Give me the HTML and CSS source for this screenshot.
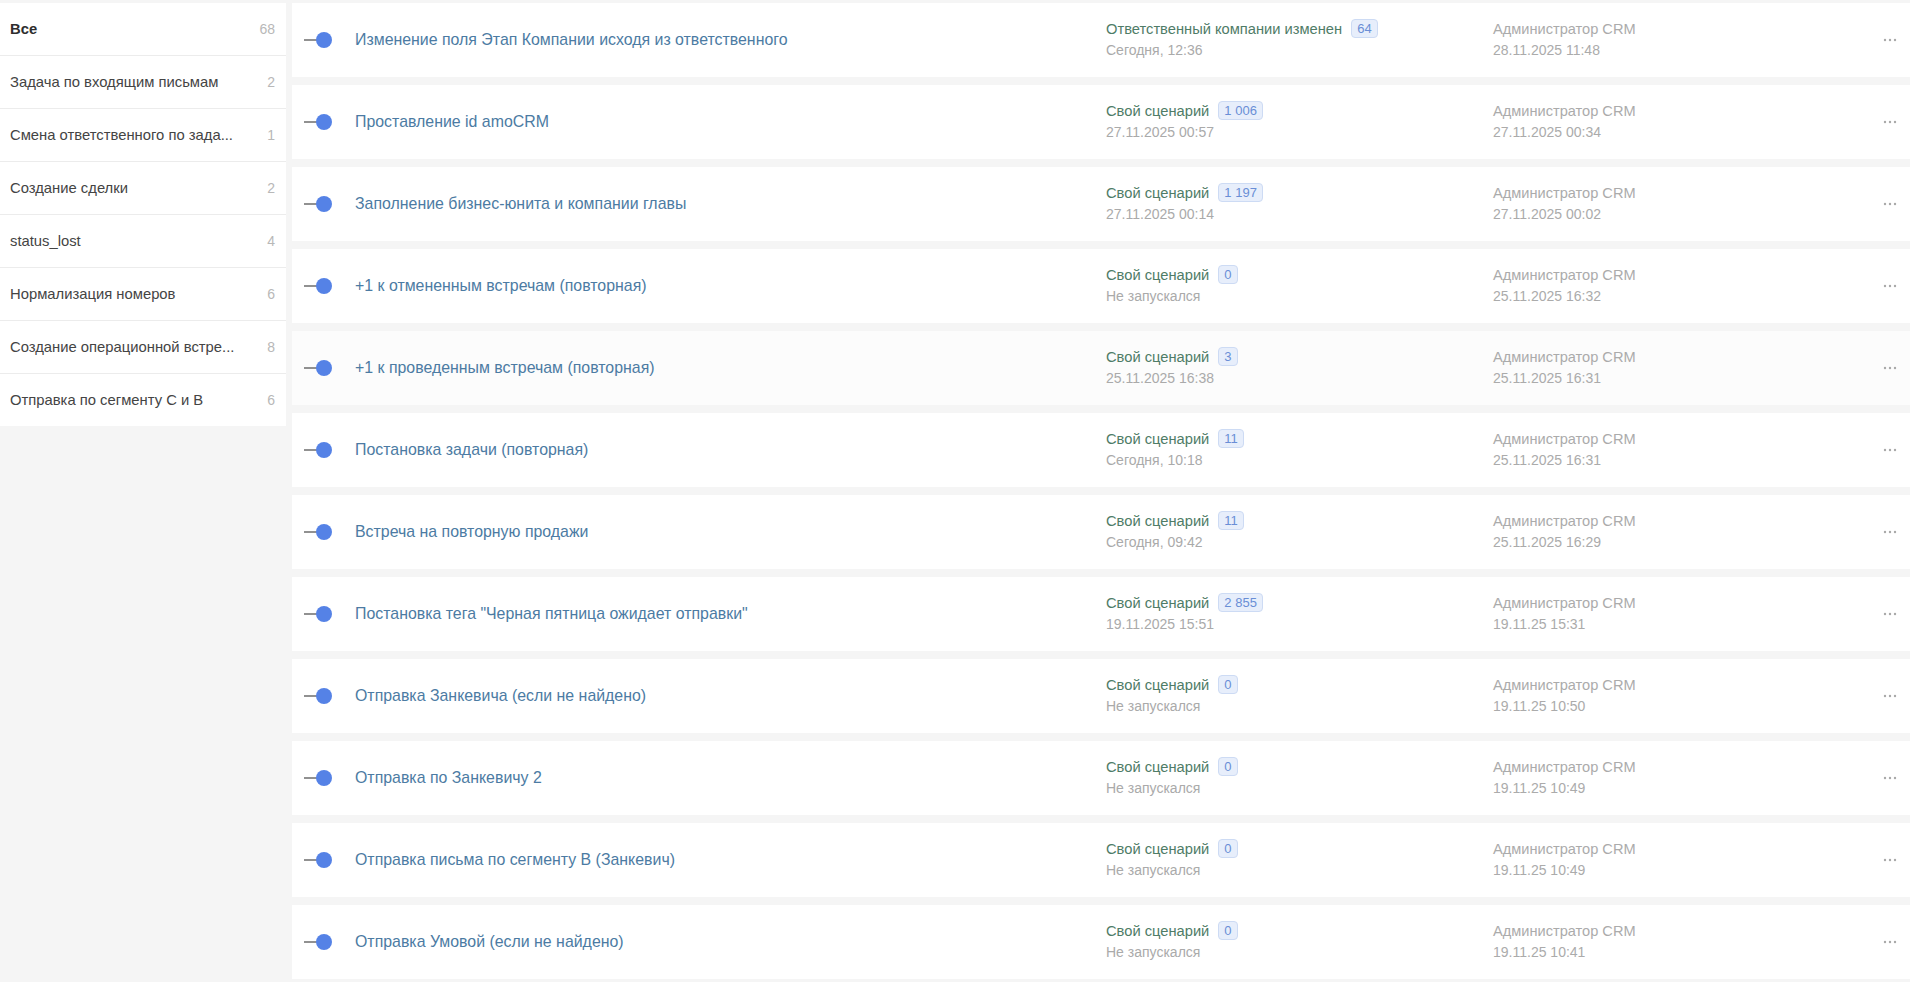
FILE: index.html
```html
<!DOCTYPE html>
<html lang="ru">
<head>
    <meta charset="UTF-8">
    <title>Сценарии</title>
    <link rel="stylesheet" href="styles.css">
</head>
<body>
    <div class="layout">
        <aside class="groups">
            <div class="group active"><span class="group-name">Все</span><span class="group-count">68</span></div>
            <div class="group"><span class="group-name">Задача по входящим письмам</span><span class="group-count">2</span></div>
            <div class="group"><span class="group-name">Смена ответственного по зада...</span><span class="group-count">1</span></div>
            <div class="group"><span class="group-name">Создание сделки</span><span class="group-count">2</span></div>
            <div class="group"><span class="group-name">status_lost</span><span class="group-count">4</span></div>
            <div class="group"><span class="group-name">Нормализация номеров</span><span class="group-count">6</span></div>
            <div class="group"><span class="group-name">Создание операционной встре...</span><span class="group-count">8</span></div>
            <div class="group"><span class="group-name">Отправка по сегменту С и В</span><span class="group-count">6</span></div>
        </aside>

        <main class="list">
            <div class="card">
                <div class="toggle"><svg width="28" height="18" viewBox="0 0 28 18"><line x1="0" y1="9" x2="14" y2="9" stroke="#555" stroke-width="1.3"/><circle cx="20" cy="9" r="8" fill="#5582e6"/></svg></div>
                <div class="title">Изменение поля Этап Компании исходя из ответственного</div>
                <div class="trigger"><div><span class="trigger-name">Ответственный компании изменен</span><span class="badge">64</span></div><div class="muted">Сегодня, 12:36</div></div>
                <div class="author"><div class="author-name">Администратор CRM</div><div>28.11.2025 11:48</div></div>
                <div class="more"><svg width="14" height="4" viewBox="0 0 14 4"><circle cx="2" cy="2" r="1.2"/><circle cx="7" cy="2" r="1.2"/><circle cx="12" cy="2" r="1.2"/></svg></div>
            </div>
            <div class="card">
                <div class="toggle"><svg width="28" height="18" viewBox="0 0 28 18"><line x1="0" y1="9" x2="14" y2="9" stroke="#555" stroke-width="1.3"/><circle cx="20" cy="9" r="8" fill="#5582e6"/></svg></div>
                <div class="title">Проставление id amoCRM</div>
                <div class="trigger"><div><span class="trigger-name">Свой сценарий</span><span class="badge">1 006</span></div><div class="muted">27.11.2025 00:57</div></div>
                <div class="author"><div class="author-name">Администратор CRM</div><div>27.11.2025 00:34</div></div>
                <div class="more"><svg width="14" height="4" viewBox="0 0 14 4"><circle cx="2" cy="2" r="1.2"/><circle cx="7" cy="2" r="1.2"/><circle cx="12" cy="2" r="1.2"/></svg></div>
            </div>
            <div class="card">
                <div class="toggle"><svg width="28" height="18" viewBox="0 0 28 18"><line x1="0" y1="9" x2="14" y2="9" stroke="#555" stroke-width="1.3"/><circle cx="20" cy="9" r="8" fill="#5582e6"/></svg></div>
                <div class="title">Заполнение бизнес-юнита и компании главы</div>
                <div class="trigger"><div><span class="trigger-name">Свой сценарий</span><span class="badge">1 197</span></div><div class="muted">27.11.2025 00:14</div></div>
                <div class="author"><div class="author-name">Администратор CRM</div><div>27.11.2025 00:02</div></div>
                <div class="more"><svg width="14" height="4" viewBox="0 0 14 4"><circle cx="2" cy="2" r="1.2"/><circle cx="7" cy="2" r="1.2"/><circle cx="12" cy="2" r="1.2"/></svg></div>
            </div>
            <div class="card">
                <div class="toggle"><svg width="28" height="18" viewBox="0 0 28 18"><line x1="0" y1="9" x2="14" y2="9" stroke="#555" stroke-width="1.3"/><circle cx="20" cy="9" r="8" fill="#5582e6"/></svg></div>
                <div class="title">+1 к отмененным встречам (повторная)</div>
                <div class="trigger"><div><span class="trigger-name">Свой сценарий</span><span class="badge">0</span></div><div class="muted">Не запускался</div></div>
                <div class="author"><div class="author-name">Администратор CRM</div><div>25.11.2025 16:32</div></div>
                <div class="more"><svg width="14" height="4" viewBox="0 0 14 4"><circle cx="2" cy="2" r="1.2"/><circle cx="7" cy="2" r="1.2"/><circle cx="12" cy="2" r="1.2"/></svg></div>
            </div>
            <div class="card hover">
                <div class="toggle"><svg width="28" height="18" viewBox="0 0 28 18"><line x1="0" y1="9" x2="14" y2="9" stroke="#555" stroke-width="1.3"/><circle cx="20" cy="9" r="8" fill="#5582e6"/></svg></div>
                <div class="title">+1 к проведенным встречам (повторная)</div>
                <div class="trigger"><div><span class="trigger-name">Свой сценарий</span><span class="badge">3</span></div><div class="muted">25.11.2025 16:38</div></div>
                <div class="author"><div class="author-name">Администратор CRM</div><div>25.11.2025 16:31</div></div>
                <div class="more"><svg width="14" height="4" viewBox="0 0 14 4"><circle cx="2" cy="2" r="1.2"/><circle cx="7" cy="2" r="1.2"/><circle cx="12" cy="2" r="1.2"/></svg></div>
            </div>
            <div class="card">
                <div class="toggle"><svg width="28" height="18" viewBox="0 0 28 18"><line x1="0" y1="9" x2="14" y2="9" stroke="#555" stroke-width="1.3"/><circle cx="20" cy="9" r="8" fill="#5582e6"/></svg></div>
                <div class="title">Постановка задачи (повторная)</div>
                <div class="trigger"><div><span class="trigger-name">Свой сценарий</span><span class="badge">11</span></div><div class="muted">Сегодня, 10:18</div></div>
                <div class="author"><div class="author-name">Администратор CRM</div><div>25.11.2025 16:31</div></div>
                <div class="more"><svg width="14" height="4" viewBox="0 0 14 4"><circle cx="2" cy="2" r="1.2"/><circle cx="7" cy="2" r="1.2"/><circle cx="12" cy="2" r="1.2"/></svg></div>
            </div>
            <div class="card">
                <div class="toggle"><svg width="28" height="18" viewBox="0 0 28 18"><line x1="0" y1="9" x2="14" y2="9" stroke="#555" stroke-width="1.3"/><circle cx="20" cy="9" r="8" fill="#5582e6"/></svg></div>
                <div class="title">Встреча на повторную продажи</div>
                <div class="trigger"><div><span class="trigger-name">Свой сценарий</span><span class="badge">11</span></div><div class="muted">Сегодня, 09:42</div></div>
                <div class="author"><div class="author-name">Администратор CRM</div><div>25.11.2025 16:29</div></div>
                <div class="more"><svg width="14" height="4" viewBox="0 0 14 4"><circle cx="2" cy="2" r="1.2"/><circle cx="7" cy="2" r="1.2"/><circle cx="12" cy="2" r="1.2"/></svg></div>
            </div>
            <div class="card">
                <div class="toggle"><svg width="28" height="18" viewBox="0 0 28 18"><line x1="0" y1="9" x2="14" y2="9" stroke="#555" stroke-width="1.3"/><circle cx="20" cy="9" r="8" fill="#5582e6"/></svg></div>
                <div class="title">Постановка тега "Черная пятница ожидает отправки"</div>
                <div class="trigger"><div><span class="trigger-name">Свой сценарий</span><span class="badge">2 855</span></div><div class="muted">19.11.2025 15:51</div></div>
                <div class="author"><div class="author-name">Администратор CRM</div><div>19.11.25 15:31</div></div>
                <div class="more"><svg width="14" height="4" viewBox="0 0 14 4"><circle cx="2" cy="2" r="1.2"/><circle cx="7" cy="2" r="1.2"/><circle cx="12" cy="2" r="1.2"/></svg></div>
            </div>
            <div class="card">
                <div class="toggle"><svg width="28" height="18" viewBox="0 0 28 18"><line x1="0" y1="9" x2="14" y2="9" stroke="#555" stroke-width="1.3"/><circle cx="20" cy="9" r="8" fill="#5582e6"/></svg></div>
                <div class="title">Отправка Занкевича (если не найдено)</div>
                <div class="trigger"><div><span class="trigger-name">Свой сценарий</span><span class="badge">0</span></div><div class="muted">Не запускался</div></div>
                <div class="author"><div class="author-name">Администратор CRM</div><div>19.11.25 10:50</div></div>
                <div class="more"><svg width="14" height="4" viewBox="0 0 14 4"><circle cx="2" cy="2" r="1.2"/><circle cx="7" cy="2" r="1.2"/><circle cx="12" cy="2" r="1.2"/></svg></div>
            </div>
            <div class="card">
                <div class="toggle"><svg width="28" height="18" viewBox="0 0 28 18"><line x1="0" y1="9" x2="14" y2="9" stroke="#555" stroke-width="1.3"/><circle cx="20" cy="9" r="8" fill="#5582e6"/></svg></div>
                <div class="title">Отправка по Занкевичу 2</div>
                <div class="trigger"><div><span class="trigger-name">Свой сценарий</span><span class="badge">0</span></div><div class="muted">Не запускался</div></div>
                <div class="author"><div class="author-name">Администратор CRM</div><div>19.11.25 10:49</div></div>
                <div class="more"><svg width="14" height="4" viewBox="0 0 14 4"><circle cx="2" cy="2" r="1.2"/><circle cx="7" cy="2" r="1.2"/><circle cx="12" cy="2" r="1.2"/></svg></div>
            </div>
            <div class="card">
                <div class="toggle"><svg width="28" height="18" viewBox="0 0 28 18"><line x1="0" y1="9" x2="14" y2="9" stroke="#555" stroke-width="1.3"/><circle cx="20" cy="9" r="8" fill="#5582e6"/></svg></div>
                <div class="title">Отправка письма по сегменту В (Занкевич)</div>
                <div class="trigger"><div><span class="trigger-name">Свой сценарий</span><span class="badge">0</span></div><div class="muted">Не запускался</div></div>
                <div class="author"><div class="author-name">Администратор CRM</div><div>19.11.25 10:49</div></div>
                <div class="more"><svg width="14" height="4" viewBox="0 0 14 4"><circle cx="2" cy="2" r="1.2"/><circle cx="7" cy="2" r="1.2"/><circle cx="12" cy="2" r="1.2"/></svg></div>
            </div>
            <div class="card">
                <div class="toggle"><svg width="28" height="18" viewBox="0 0 28 18"><line x1="0" y1="9" x2="14" y2="9" stroke="#555" stroke-width="1.3"/><circle cx="20" cy="9" r="8" fill="#5582e6"/></svg></div>
                <div class="title">Отправка Умовой (если не найдено)</div>
                <div class="trigger"><div><span class="trigger-name">Свой сценарий</span><span class="badge">0</span></div><div class="muted">Не запускался</div></div>
                <div class="author"><div class="author-name">Администратор CRM</div><div>19.11.25 10:41</div></div>
                <div class="more"><svg width="14" height="4" viewBox="0 0 14 4"><circle cx="2" cy="2" r="1.2"/><circle cx="7" cy="2" r="1.2"/><circle cx="12" cy="2" r="1.2"/></svg></div>
            </div>
        </main>
    </div>
</body>
</html>
```

FILE: styles.css
```css
html, body {
    margin: 0;
    padding: 0;
    background-color: #f5f5f5;
    font-family: "Liberation Sans", "Noto Sans", sans-serif;
    font-size: 14px;
    color: #444;
    overflow: hidden;
}
.layout {
    display: flex;
    align-items: flex-start;
    padding-top: 3px;
}
.groups {
    width: 286px;
    flex-shrink: 0;
    background-color: #fff;
}
.group {
    display: flex;
    justify-content: space-between;
    align-items: center;
    height: 52px;
    padding: 0 11px 0 10px;
    border-bottom: 1px solid #ececec;
}
.group:last-child {
    border-bottom: none;
}
.group-name {
    font-size: 14.8px;
    color: #444;
    white-space: nowrap;
}
.group.active .group-name {
    font-weight: bold;
    color: #2e2e2e;
}
.group-count {
    color: #b8b8b8;
}
.list {
    flex: 1;
    margin-left: 6px;
    display: flex;
    flex-direction: column;
    gap: 8px;
}
.card {
    display: grid;
    grid-template-columns: 51px 751px 387px 1fr 40px;
    align-items: center;
    height: 74px;
    padding-left: 12px;
    background-color: #fff;
}
.card.hover {
    background-color: #fcfcfc;
}
.toggle svg {
    display: block;
}
.title {
    font-size: 15.9px;
    color: #4c7ba3;
}
.trigger, .author {
    line-height: 21px;
}
.trigger-name {
    font-size: 14.7px;
    color: #4f7c67;
}
.badge {
    display: inline-block;
    margin-left: 9px;
    padding: 0 5px;
    line-height: 17px;
    font-size: 13px;
    color: #6a8ed6;
    background-color: #e7eefb;
    border: 1px solid #cddbf4;
    border-radius: 4px;
    vertical-align: 1px;
}
.muted {
    color: #aaa;
}
.author {
    color: #ababab;
}
.author-name {
    font-size: 14.6px;
}
.more {
    display: flex;
    justify-content: center;
}
.more svg {
    fill: #a8a8a8;
}
```
